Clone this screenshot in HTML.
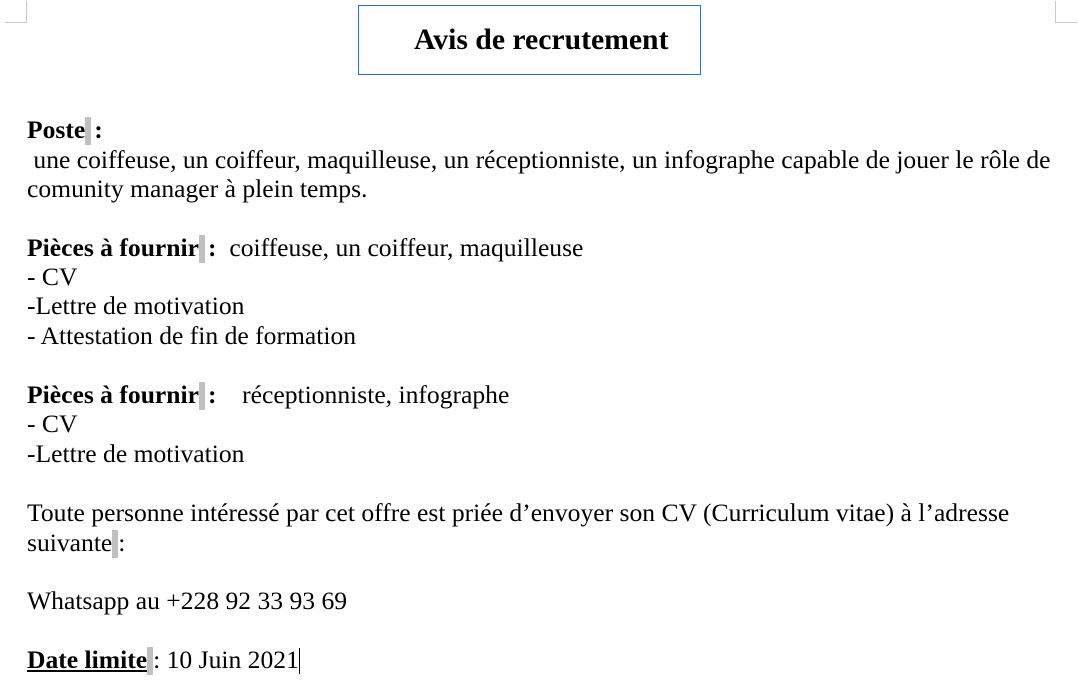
<!DOCTYPE html>
<html><head><meta charset="utf-8"><style>
html,body{margin:0;padding:0;background:#fff;width:1078px;height:693px;overflow:hidden;position:relative}
body{font-family:"Liberation Serif",serif;font-size:25.6px;color:#000}
.l{position:absolute;left:27px;white-space:pre;line-height:30px;height:30px;margin-top:-1px}
.g{display:inline-block;width:6px;height:28px;background:#c0c0c0;vertical-align:-7px;margin-right:3px}
.g0{margin-right:0}
b{font-weight:bold}
.title{position:absolute;left:358px;top:5px;width:343px;height:70px;border:1px solid #3f6bb5;box-sizing:border-box}
.title span{position:absolute;left:55px;top:17px;font-weight:bold;font-size:29.7px;white-space:nowrap;line-height:34px}
.cm{position:absolute;width:21px;height:21px;border-color:#c8c8c8;border-style:solid;border-width:0}
</style></head><body>
<div class="cm" style="left:5px;top:1px;border-right-width:1px;border-bottom-width:1px"></div>
<div class="cm" style="left:1055px;top:1px;border-left-width:1px;border-bottom-width:1px"></div>
<div class="title"><span>Avis de recrutement</span></div>
<div class="l" style="top:116px"><b>Poste</b><span class="g"></span><b>:</b></div>
<div class="l" style="top:146px"> une coiffeuse, un coiffeur, maquilleuse, un réceptionniste, un infographe capable de jouer le rôle de</div>
<div class="l" style="top:175px">comunity manager à plein temps.</div>
<div class="l" style="top:234px"><b>Pièces à fournir</b><span class="g"></span><b>:</b>  coiffeuse, un coiffeur, maquilleuse</div>
<div class="l" style="top:263px">- CV</div>
<div class="l" style="top:292px">-Lettre de motivation</div>
<div class="l" style="top:322px">- Attestation de fin de formation</div>
<div class="l" style="top:381px"><b>Pièces à fournir</b><span class="g"></span><b>:</b>    réceptionniste, infographe</div>
<div class="l" style="top:410px">- CV</div>
<div class="l" style="top:440px">-Lettre de motivation</div>
<div class="l" style="top:499px">Toute personne intéressé par cet offre est priée d’envoyer son CV (Curriculum vitae) à l’adresse</div>
<div class="l" style="top:529px">suivante<span class="g g0"></span>:</div>
<div class="l" style="top:587px">Whatsapp au +228 92 33 93 69</div>
<div class="l" style="top:646px"><b><u>Date limite</u></b><span class="g g0"></span>: 10 Juin 2021<span style="display:inline-block;width:1px;height:26px;background:#000;vertical-align:-6px"></span></div>
</body></html>
